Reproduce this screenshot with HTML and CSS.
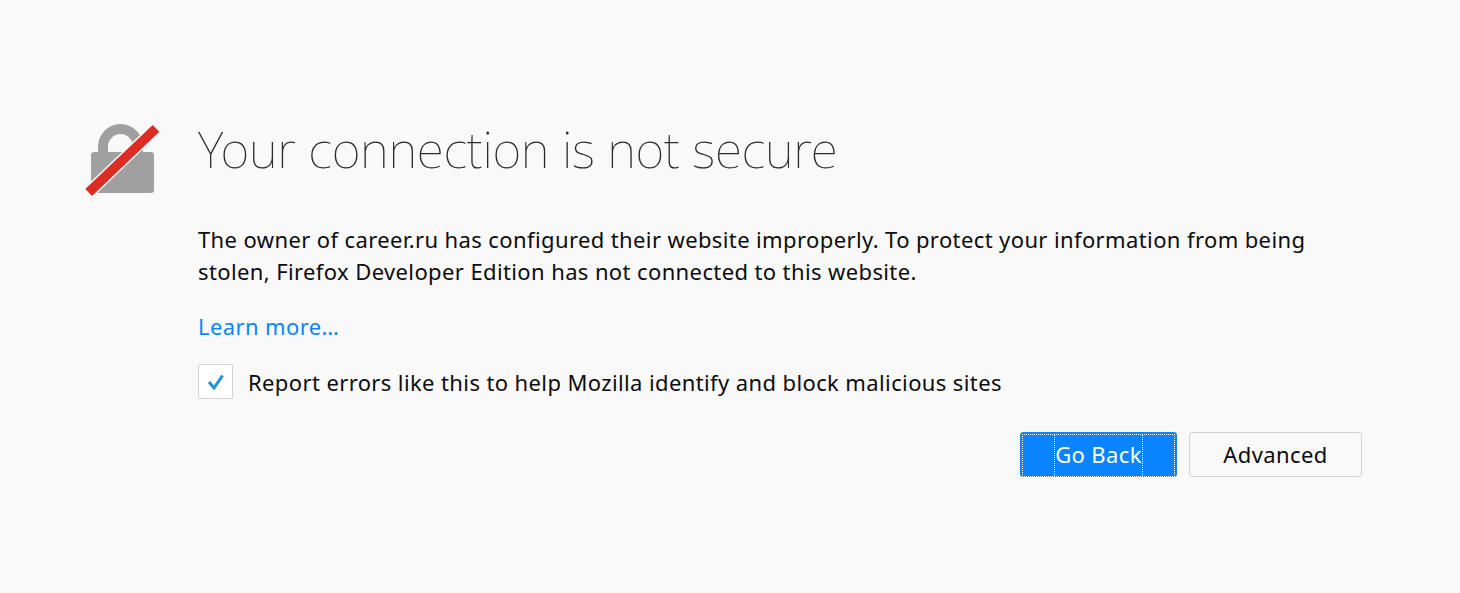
FILE: index.html
```html
<!DOCTYPE html>
<html lang="en">
<head>
    <meta charset="UTF-8">
    <title>Insecure Connection</title>
    <link rel="stylesheet" href="styles.css">
</head>
<body>
    <div class="container">
        <div class="icon-column">
            <svg class="lock-icon" width="75" height="73" viewBox="0 0 75 73">
                <path fill="none" stroke="#a0a0a0" stroke-width="10" d="M18 29 V23 A17.500 18 0 0 1 53 23 V29"/>
                <rect x="6" y="28" width="63" height="41" rx="3" fill="#a0a0a0"/>
                <path fill="#dd2c23" stroke="#f9f9fa" stroke-width="3" paint-order="stroke" d="M67.700 1 L74.300 7.700 L7 72 L0.300 65 Z"/>
            </svg>
        </div>
        <div class="content">
            <h1 class="title">Your connection is not secure</h1>
            <p class="description">The owner of career.ru has configured their website improperly. To protect your information from being stolen, Firefox Developer Edition has not connected to this website.</p>
            <a class="learn-more" href="#">Learn more…</a>
            <label class="report-row">
                <span class="checkbox">
                    <svg width="18" height="18" viewBox="0 0 18 18">
                        <path fill="none" stroke="#2292d0" stroke-width="3" d="M2 9 L7 15 L15.500 2.500"/>
                    </svg>
                </span>
                <span>Report errors like this to help Mozilla identify and block malicious sites</span>
            </label>
            <div class="button-row">
                <button class="btn btn-primary"><span class="btn-inner"><span class="btn-label">Go Back</span></span></button>
                <button class="btn">Advanced</button>
            </div>
        </div>
    </div>
</body>
</html>
```

FILE: styles.css
```css
body {
    margin: 0;
    height: 593px;
    background: #f9f9fa;
    color: #0c0c0d;
    font-family: "Noto Sans", sans-serif;
    font-size: 22px;
    letter-spacing: 0.385px;
    overflow: hidden;
}

.container {
    display: flex;
    padding: 124px 98px 0 85px;
}

.icon-column {
    width: 113px;
    flex-shrink: 0;
}

.lock-icon {
    display: block;
}

.content {
    flex: 1;
}

.title {
    margin: -4px 0 0;
    font-size: 50px;
    line-height: 58px;
    font-weight: 100;
    letter-spacing: -0.31px;
    color: #2a2a2e;
}

.description {
    margin: 45px 0 0;
    line-height: 32px;
}

.learn-more {
    display: block;
    margin-top: 23px;
    line-height: 32px;
    color: #0a84ff;
    text-decoration: none;
}

.report-row {
    display: flex;
    align-items: center;
    gap: 15px;
    margin-top: 22px;
}

.checkbox {
    display: flex;
    align-items: center;
    justify-content: center;
    width: 33px;
    height: 33px;
    background: #fff;
    border: 1px solid #d2d2d4;
    border-radius: 2px;
}

.button-row {
    display: flex;
    justify-content: flex-end;
    gap: 12px;
    margin-top: 33px;
}

.btn {
    height: 45px;
    width: 173px;
    padding: 0 0 2px;
    background: #f9f9fa;
    border: 1px solid #d2d2d4;
    border-radius: 3px;
    color: #0c0c0d;
    font-family: inherit;
    font-size: 22px;
    letter-spacing: inherit;
}

.btn-primary {
    display: flex;
    width: 157px;
    padding: 1px;
    background: #0a84ff;
    border-color: #0a84ff;
    color: #fff;
}

.btn-inner {
    display: flex;
    justify-content: center;
    align-items: center;
    width: 100%;
    height: 41px;
    border: 1px dotted #fff;
}

.btn-label {
    display: flex;
    align-items: center;
    height: 100%;
    padding-bottom: 3px;
    box-sizing: border-box;
    border-left: 1px dotted #fff;
    border-right: 1px dotted #fff;
}
```
